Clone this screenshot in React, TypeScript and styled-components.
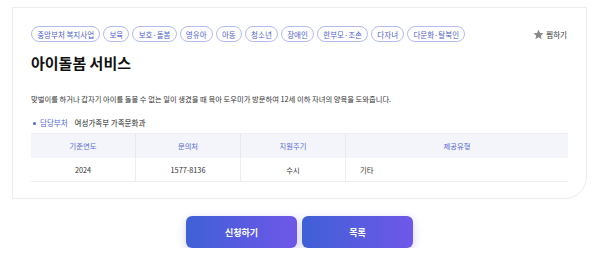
import React from 'react';
import styled, { createGlobalStyle } from 'styled-components';

const tags = ['중앙부처 복지사업', '보육', '보호·돌봄', '영유아', '아동', '청소년', '장애인', '한부모·조손', '다자녀', '다문화·탈북인'];

const rows = [
  { year: '2024', tel: '1577-8136', cycle: '수시', type: '기타' }
];

const App = () => {
  return (
    <>
      <GlobalStyle />
      <Page>
        <Card>
          <TopRow>
            <Tags>
              {tags.map(t => <Tag key={t}>{t}</Tag>)}
            </Tags>
            <Like>
              <svg width="11" height="11" viewBox="0 0 24 24">
                <path d="M12 1.5l3.2 7.1 7.8.7-5.9 5.2 1.8 7.6L12 18.1l-6.9 4 1.8-7.6L1 9.3l7.8-.7z" fill="#8a8a8a" />
              </svg>
              찜하기
            </Like>
          </TopRow>
          <Title>아이돌봄 서비스</Title>
          <Desc>맞벌이를 하거나 갑자기 아이를 돌볼 수 없는 일이 생겼을 때 육아 도우미가 방문하여 12세 이하 자녀의 양육을 도와줍니다.</Desc>
          <Dept>
            <DeptLabel>담당부처</DeptLabel>
            여성가족부 가족문화과
          </Dept>
          <Table>
            <thead>
              <tr>
                <Th>기준연도</Th>
                <Th>문의처</Th>
                <Th>지원주기</Th>
                <Th $wide>제공유형</Th>
              </tr>
            </thead>
            <tbody>
              {rows.map(r => (
                <tr key={r.year}>
                  <Td>{r.year}</Td>
                  <Td>{r.tel}</Td>
                  <Td>{r.cycle}</Td>
                  <Td $left>{r.type}</Td>
                </tr>
              ))}
            </tbody>
          </Table>
        </Card>
        <Buttons>
          <Button>신청하기</Button>
          <Button>목록</Button>
        </Buttons>
      </Page>
    </>
  );
};

const GlobalStyle = createGlobalStyle`
  body {
    margin: 0;
    background: #fff;
    font-family: "Noto Sans CJK KR", "Noto Sans", sans-serif;
    color: #222;
  }
`;

const Page = styled.div`
  padding: 7px 13px 0 12px;
`;

const Card = styled.div`
  border: 1px solid #ececec;
  border-radius: 0 0 22px 0;
  padding: 18px 18px;
  height: 192px;
  box-sizing: border-box;
`;

const TopRow = styled.div`
  display: flex;
  align-items: center;
  justify-content: space-between;
`;

const Tags = styled.div`
  display: flex;
  gap: 3px;
`;

const Tag = styled.span`
  display: inline-flex;
  align-items: center;
  height: 16px;
  padding: 0 5.2px;
  box-sizing: border-box;
  border: 1px solid #b3bbef;
  border-radius: 8px;
  font-size: 7.5px;
  color: #4f5fc9;
  white-space: nowrap;
`;

const Like = styled.span`
  display: inline-flex;
  align-items: center;
  gap: 2px;
  margin-right: 1px;
  font-size: 7.5px;
  color: #333;
`;

const Title = styled.h1`
  margin: 12px 0 0;
  font-size: 15px;
  font-weight: 700;
  line-height: 18px;
  color: #111;
`;

const Desc = styled.p`
  margin: 21px 0 0;
  font-size: 7.3px;
  line-height: 12px;
  color: #333;
`;

const Dept = styled.div`
  display: flex;
  align-items: center;
  margin-top: 12px;
  padding-left: 2px;
  font-size: 7.5px;
  line-height: 12px;
  color: #222;
`;

const DeptLabel = styled.span`
  display: inline-flex;
  align-items: center;
  margin-right: 7px;
  color: #4f68d8;

  &::before {
    content: '';
    width: 3px;
    height: 3px;
    border-radius: 50%;
    background: #4f68d8;
    margin-right: 4px;
  }
`;

const Table = styled.table`
  width: 100%;
  margin-top: 4px;
  border-collapse: collapse;
  table-layout: fixed;
  font-size: 7.3px;
`;

const Th = styled.th<{ $wide?: boolean }>`
  width: ${p => (p.$wide ? 'auto' : '104px')};
  height: 24px;
  padding: 0;
  background: #f4f5fa;
  border-top: 1px solid #ececf2;
  border-left: 1px solid #e8e9ef;
  font-weight: 400;
  color: #5568d8;
  text-align: center;

  &:first-child {
    border-left: none;
  }
`;

const Td = styled.td<{ $left?: boolean }>`
  height: 23px;
  padding: ${p => (p.$left ? '0 0 0 14px' : '0')};
  border-bottom: 1px solid #ececf2;
  border-left: 1px solid #ececf2;
  text-align: ${p => (p.$left ? 'left' : 'center')};
  color: #333;

  &:first-child {
    border-left: none;
  }
`;

const Buttons = styled.div`
  display: flex;
  justify-content: center;
  gap: 5px;
  margin-top: 17px;
`;

const Button = styled.button`
  width: 111px;
  height: 32px;
  border: none;
  border-radius: 6px;
  background: linear-gradient(90deg, #3f60d6 0%, #6f57e9 100%);
  box-shadow: 0 3px 10px rgba(110, 100, 230, 0.3);
  color: #fff;
  font-family: inherit;
  font-size: 9px;
  font-weight: 700;
  cursor: pointer;
`;

export default App;
